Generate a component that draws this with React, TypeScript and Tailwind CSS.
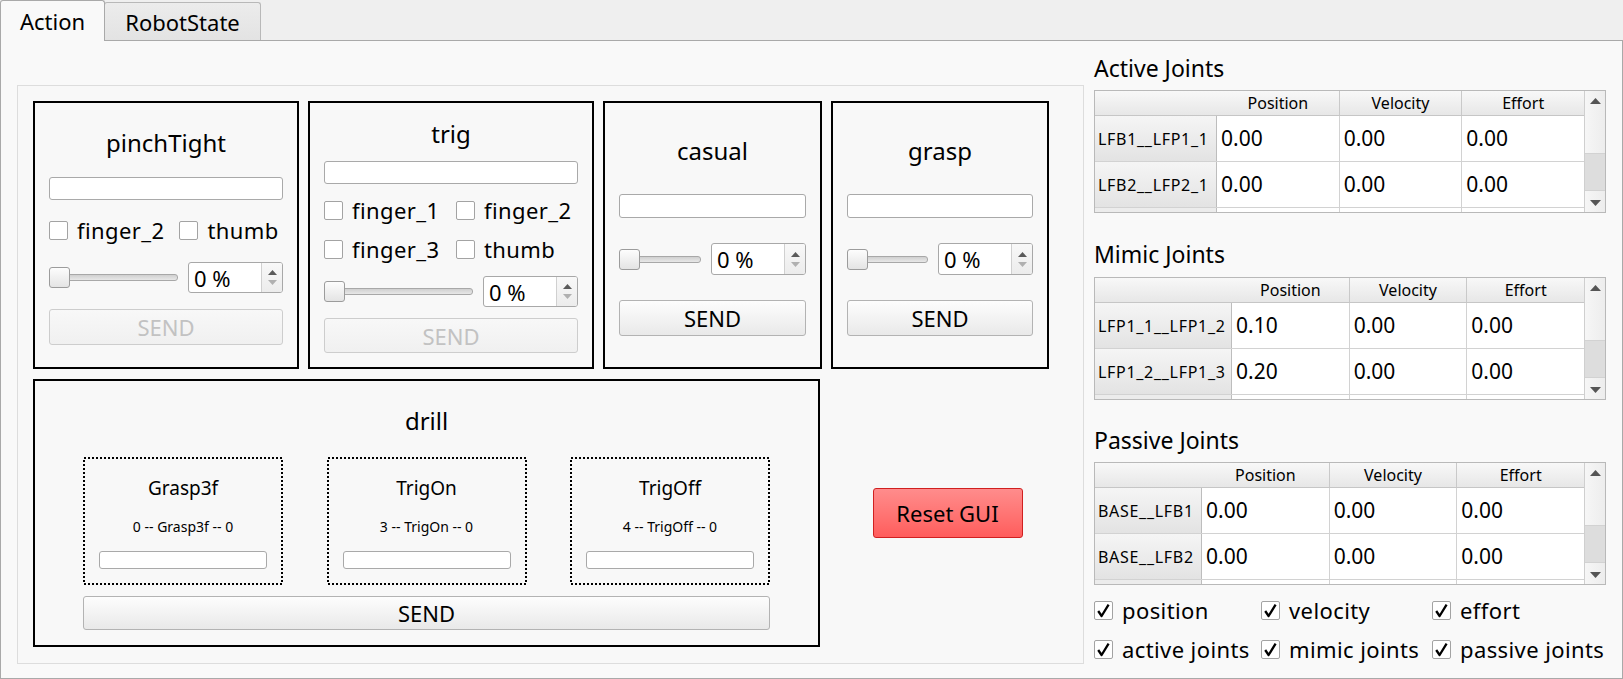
import React from "react";

function TextInput({ className = "" }: { className?: string }) {
  return <div className={`w-full rounded-[3px] border border-[#a9a9a9] bg-white ${className}`} />;
}

function Box({ checked }: { checked?: boolean }) {
  return (
    <div className="w-[19px] h-[19px] shrink-0 rounded-[2px] border border-[#a3a3a3] bg-white flex items-center justify-center">
      {checked && (
        <svg width="17" height="17" viewBox="0 0 17 17">
          <path d="M3.2 9 L6.6 14 L13.6 2.6" fill="none" stroke="#000" strokeWidth="2.3" strokeLinejoin="round" />
        </svg>
      )}
    </div>
  );
}

function Check({ label, checked, className = "" }: { label: string; checked?: boolean; className?: string }) {
  return (
    <div className={`flex items-center ${className}`}>
      <Box checked={checked} />
      <span className="ml-[9px] text-[22px] tracking-[0.4px] leading-[21px] whitespace-nowrap">{label}</span>
    </div>
  );
}

function Slider() {
  return (
    <div className="relative flex-1 h-[21px] flex items-center">
      <div className="w-full h-[7px] rounded-[3px] border border-[#a8a8a8] bg-gradient-to-b from-[#d0d0d0] to-[#e8e8e8]" />
      <div className="absolute left-0 top-0 w-[21px] h-[21px] rounded-[3px] border border-[#9c9c9c] bg-gradient-to-b from-[#fdfdfd] to-[#e4e4e4]" />
    </div>
  );
}

function Spin({ className = "" }: { className?: string }) {
  return (
    <div className={`w-[95px] flex rounded-[3px] border border-[#a8a8a8] bg-white overflow-hidden ${className}`}>
      <div className="flex-1 flex items-center pl-[5px] text-[22px] leading-none">0 %</div>
      <div className="w-[21px] border-l border-[#d0d0d0] bg-gradient-to-b from-[#f8f8f8] to-[#ececec] flex flex-col items-center justify-center gap-[5px]">
        <svg width="9" height="5" viewBox="0 0 9 5">
          <path d="M0 5 L4.5 0 L9 5Z" fill="#5a5a5a" />
        </svg>
        <svg width="9" height="5" viewBox="0 0 9 5">
          <path d="M0 0 L4.5 5 L9 0Z" fill="#b0b0b0" />
        </svg>
      </div>
    </div>
  );
}

function SliderRow({ className = "" }: { className?: string }) {
  return (
    <div className={`flex items-center gap-[10px] ${className}`}>
      <Slider />
      <Spin className="h-full" />
    </div>
  );
}

function Btn({ children, disabled, className = "" }: { children: React.ReactNode; disabled?: boolean; className?: string }) {
  return (
    <div
      className={`w-full flex items-center justify-center rounded-[3px] border text-[22px] leading-none ${
        disabled
          ? "border-[#cdcdcd] bg-gradient-to-b from-[#f8f8f8] to-[#f0f0f0] text-[#c2c2c2]"
          : "border-[#b3b3b3] bg-gradient-to-b from-[#fdfdfd] to-[#e9e9e9] text-black"
      } ${className}`}
    >
      {children}
    </div>
  );
}

function Title({ children, className = "" }: { children: React.ReactNode; className?: string }) {
  return <div className={`h-[30px] text-center text-[24px] leading-[30px] ${className}`}>{children}</div>;
}

function DrillItem({ name, label }: { name: string; label: string }) {
  return (
    <div className="relative w-[200px] h-[128px] flex flex-col px-[16px]">
      <svg className="absolute inset-0 pointer-events-none" width="200" height="128" viewBox="0 0 200 128" shapeRendering="crispEdges">
        <rect x="1" y="1" width="198" height="126" fill="none" stroke="#000" strokeWidth="2" strokeDasharray="2 2" />
      </svg>
      <div className="mt-[19px] h-[24px] text-center text-[19px] leading-[24px]">{name}</div>
      <div className="mt-[18px] h-[18px] text-center text-[14px] leading-[18px] whitespace-nowrap">{label}</div>
      <TextInput className="mt-[15px] h-[18px]" />
    </div>
  );
}

function UpArrow() {
  return (
    <svg width="11" height="6" viewBox="0 0 11 6">
      <path d="M0 6 L5.5 0 L11 6Z" fill="#555" />
    </svg>
  );
}
function DownArrow() {
  return (
    <svg width="11" height="6" viewBox="0 0 11 6">
      <path d="M0 0 L5.5 6 L11 0Z" fill="#555" />
    </svg>
  );
}

function Scrollbar() {
  return (
    <div className="w-[21px] border-l border-[#cfcfcf] bg-gradient-to-r from-[#f6f6f6] to-[#ededed] flex flex-col">
      <div className="h-[20px] flex items-center justify-center">
        <UpArrow />
      </div>
      <div className="h-[42px]" />
      <div className="h-[38px] bg-[#dddddd] border-y border-[#d2d2d2]" />
      <div className="flex-1" />
      <div className="h-[19px] flex items-center justify-center">
        <DownArrow />
      </div>
    </div>
  );
}

type Row = { name: string; vals: string[] };

function JointTable({ vw, rows }: { vw: string; rows: Row[] }) {
  const cols = ["Position", "Velocity", "Effort"];
  return (
    <div className="h-[123px] border border-[#b9b9b9] flex bg-white overflow-hidden">
      <div className="flex-1 flex flex-col min-w-0">
        <div className="h-[25px] shrink-0 flex border-b border-[#c6c6c6] bg-gradient-to-b from-[#f8f8f8] to-[#e7e7e7] text-[16px]">
          <div className={`${vw} shrink-0`} />
          {cols.map((c, i) => (
            <div key={c} className={`flex-1 flex items-center justify-center ${i > 0 ? "border-l border-[#c9c9c9]" : ""}`}>
              {c}
            </div>
          ))}
        </div>
        {rows.map((r) => (
          <div key={r.name} className="h-[46px] shrink-0 flex border-b border-[#d2d2d2]">
            <div className={`${vw} shrink-0 flex items-center pl-[3px] text-[16px] tracking-[0.7px] border-r border-[#bdbdbd] bg-gradient-to-b from-[#f5f5f5] to-[#e3e3e3] whitespace-nowrap`}>
              {r.name}
            </div>
            {r.vals.map((v, i) => (
              <div key={i} className={`flex-1 flex items-center pl-[4px] text-[21px] ${i > 0 ? "border-l border-[#d2d2d2]" : ""}`}>
                {v}
              </div>
            ))}
          </div>
        ))}
        <div className="flex-1 flex">
          <div className={`${vw} shrink-0 border-r border-[#bdbdbd] bg-[#ececec]`} />
          <div className="flex-1" />
          <div className="flex-1 border-l border-[#d2d2d2]" />
          <div className="flex-1 border-l border-[#d2d2d2]" />
        </div>
      </div>
      <Scrollbar />
    </div>
  );
}

function SectionTitle({ children, className = "" }: { children: React.ReactNode; className?: string }) {
  return <div className={`h-[26px] text-[23px] leading-[26px] ${className}`}>{children}</div>;
}

export default function App() {
  return (
    <div className="w-[1623px] h-[679px] bg-[#efefef] font-['Noto_Sans',sans-serif] text-black overflow-hidden">
      {/* tabs */}
      <div className="h-[40px] flex items-end">
        <div className="relative z-10 -mb-px w-[105px] h-[41px] rounded-t-[3px] border border-b-0 border-[#a9a9a9] bg-[#f9f9f9] flex items-center justify-center text-[22px] leading-none">
          Action
        </div>
        <div className="w-[157px] h-[38px] -ml-px rounded-t-[3px] border border-b-0 border-[#b8b8b8] bg-gradient-to-b from-[#ececec] to-[#e3e3e3] flex items-center justify-center text-[22px] leading-none">
          RobotState
        </div>
      </div>
      {/* pane */}
      <div className="h-[639px] border border-[#a9a9a9] bg-[#f9f9f9] flex">
        {/* left frame */}
        <div className="ml-[16px] mt-[44px] w-[1067px] h-[579px] border border-[#dddddd] bg-[#f8f8f8] pt-[15px] pl-[15px] flex flex-col">
          <div className="flex gap-[9px]">
            {/* pinchTight */}
            <div className="w-[266px] h-[268px] border-2 border-black px-[14px] flex flex-col">
              <Title className="mt-[25px]">pinchTight</Title>
              <TextInput className="mt-[19px] h-[23px]" />
              <div className="mt-[20px] h-[21px] flex items-center">
                <Check label="finger_2" />
                <Check label="thumb" className="ml-[15px]" />
              </div>
              <SliderRow className="mt-[21px] h-[31px]" />
              <Btn disabled className="mt-[16px] h-[36px]">SEND</Btn>
            </div>
            {/* trig */}
            <div className="w-[286px] h-[268px] border-2 border-black px-[14px] flex flex-col">
              <Title className="mt-[16px]">trig</Title>
              <TextInput className="mt-[12px] h-[23px]" />
              <div className="mt-[16px] h-[21px] flex items-center">
                <Check label="finger_1" className="w-[132px]" />
                <Check label="finger_2" />
              </div>
              <div className="mt-[18px] h-[21px] flex items-center">
                <Check label="finger_3" className="w-[132px]" />
                <Check label="thumb" />
              </div>
              <SliderRow className="mt-[16px] h-[31px]" />
              <Btn disabled className="mt-[11px] h-[35px]">SEND</Btn>
            </div>
            {/* casual */}
            <div className="w-[219px] h-[268px] border-2 border-black px-[14px] flex flex-col">
              <Title className="mt-[33px]">casual</Title>
              <TextInput className="mt-[28px] h-[24px]" />
              <SliderRow className="mt-[25px] h-[32px]" />
              <Btn className="mt-[25px] h-[36px]">SEND</Btn>
            </div>
            {/* grasp */}
            <div className="w-[218px] h-[268px] border-2 border-black px-[14px] flex flex-col">
              <Title className="mt-[33px]">grasp</Title>
              <TextInput className="mt-[28px] h-[24px]" />
              <SliderRow className="mt-[25px] h-[32px]" />
              <Btn className="mt-[25px] h-[36px]">SEND</Btn>
            </div>
          </div>
          <div className="mt-[10px] flex">
            {/* drill */}
            <div className="w-[787px] h-[268px] border-2 border-black px-[48px] flex flex-col">
              <Title className="mt-[25px]">drill</Title>
              <div className="mt-[21px] flex justify-between">
                <DrillItem name="Grasp3f" label="0 -- Grasp3f -- 0" />
                <DrillItem name="TrigOn" label="3 -- TrigOn -- 0" />
                <DrillItem name="TrigOff" label="4 -- TrigOff -- 0" />
              </div>
              <Btn className="mt-[11px] h-[34px]">SEND</Btn>
            </div>
            <div className="flex-1 flex items-center justify-center pr-[8px]">
              <div className="w-[150px] h-[50px] rounded-[3px] border border-[#d02020] bg-gradient-to-b from-[#ff8c8c] to-[#ff5c5c] flex items-center justify-center text-[22px] leading-none">
                Reset GUI
              </div>
            </div>
          </div>
        </div>
        {/* right panel */}
        <div className="ml-[10px] w-[512px] flex flex-col">
          <SectionTitle className="mt-[14px]">Active Joints</SectionTitle>
          <div className="mt-[9px]">
            <JointTable
              vw="w-[122px]"
              rows={[
                { name: "LFB1__LFP1_1", vals: ["0.00", "0.00", "0.00"] },
                { name: "LFB2__LFP2_1", vals: ["0.00", "0.00", "0.00"] },
              ]}
            />
          </div>
          <SectionTitle className="mt-[28px]">Mimic Joints</SectionTitle>
          <div className="mt-[10px]">
            <JointTable
              vw="w-[137px]"
              rows={[
                { name: "LFP1_1__LFP1_2", vals: ["0.10", "0.00", "0.00"] },
                { name: "LFP1_2__LFP1_3", vals: ["0.20", "0.00", "0.00"] },
              ]}
            />
          </div>
          <SectionTitle className="mt-[27px]">Passive Joints</SectionTitle>
          <div className="mt-[9px]">
            <JointTable
              vw="w-[107px]"
              rows={[
                { name: "BASE__LFB1", vals: ["0.00", "0.00", "0.00"] },
                { name: "BASE__LFB2", vals: ["0.00", "0.00", "0.00"] },
              ]}
            />
          </div>
          <div className="mt-[14px] h-[22px] flex items-center">
            <Check checked label="position" className="w-[167px]" />
            <Check checked label="velocity" className="w-[171px]" />
            <Check checked label="effort" />
          </div>
          <div className="mt-[17px] h-[22px] flex items-center">
            <Check checked label="active joints" className="w-[167px]" />
            <Check checked label="mimic joints" className="w-[171px]" />
            <Check checked label="passive joints" />
          </div>
        </div>
      </div>
    </div>
  );
}
